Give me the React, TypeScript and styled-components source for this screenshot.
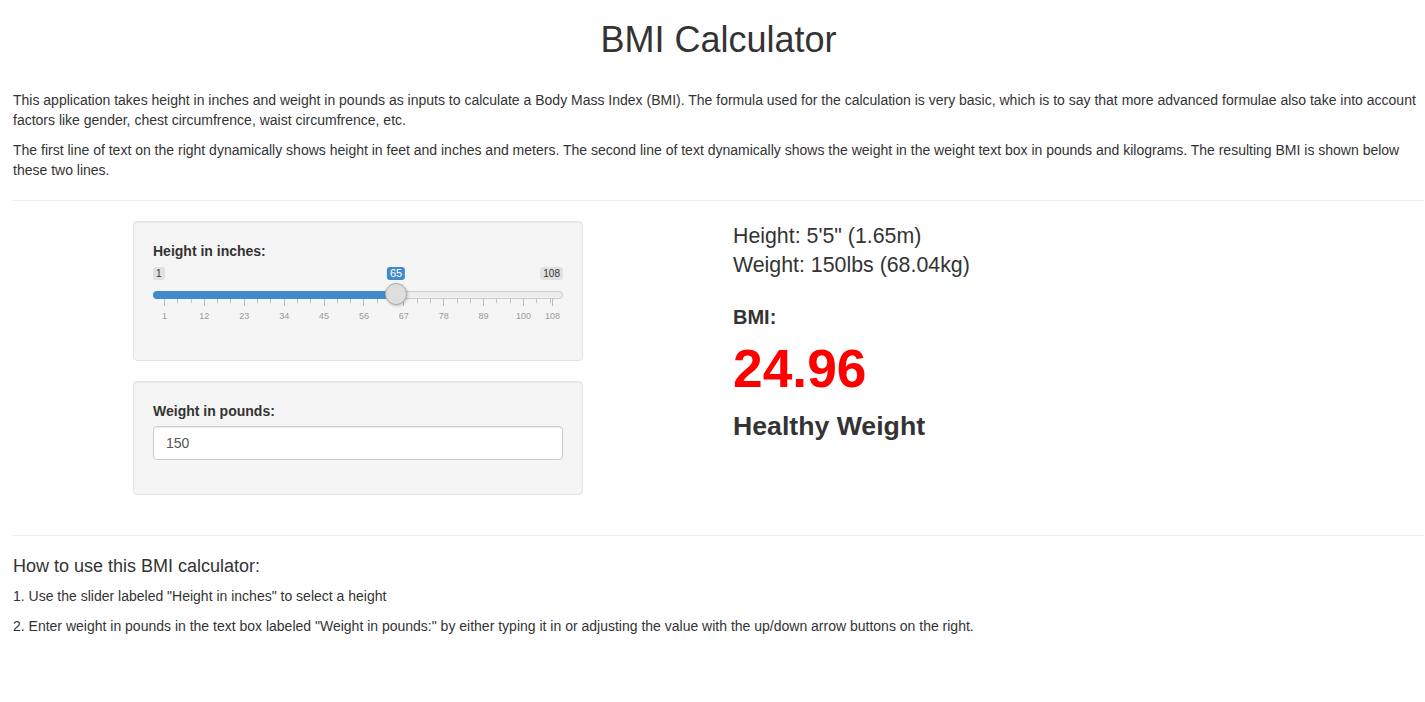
import styled, { createGlobalStyle } from "styled-components";

const GlobalStyle = createGlobalStyle`
  html, body {
    margin: 0;
    padding: 0;
    background: #fff;
    overflow-x: hidden;
  }
  body {
    font-family: "Liberation Sans", Arial, Helvetica, sans-serif;
    font-size: 14px;
    line-height: 20px;
    color: #333;
  }
  * {
    box-sizing: border-box;
  }
`;

const Page = styled.div`
  width: 1411px;
  margin-left: 13px;
`;

const Title = styled.h1`
  margin: 20px 0 30px;
  font-size: 36px;
  font-weight: 400;
  line-height: 39.6px;
  text-align: center;
`;

const Text = styled.p`
  margin: 0 0 10px;
`;

const Divider = styled.hr`
  margin: 20px 0;
  border: 0;
  border-top: 1px solid #eee;
`;

const Row = styled.div`
  display: flex;
  align-items: flex-start;
  gap: 150px;
  padding-left: 120px;
`;

const SideCol = styled.div`
  width: 450px;
  display: flex;
  flex-direction: column;
  gap: 20px;
  margin-bottom: 20px;
`;

const MainCol = styled.div`
  display: flex;
  flex-direction: column;
  padding-top: 1px;
`;

const Well = styled.div`
  padding: 19px;
  background: #f5f5f5;
  border: 1px solid #e3e3e3;
  border-radius: 4px;
  box-shadow: inset 0 1px 1px rgba(0, 0, 0, 0.05);
`;

const FormGroup = styled.div`
  display: flex;
  flex-direction: column;
  align-items: stretch;
  gap: 5px;
  margin-bottom: 15px;
`;

const Label = styled.label`
  font-weight: 700;
`;

const SliderBox = styled.div`
  position: relative;
  height: 60px;
`;

const Tag = styled.span<{ $active?: boolean }>`
  position: absolute;
  top: 1px;
  padding: 1px 3px;
  font-size: ${(p) => (p.$active ? "11px" : "10px")};
  line-height: 11px;
  border-radius: 3px;
  background: ${(p) => (p.$active ? "#428bca" : "#e1e1e1")};
  color: ${(p) => (p.$active ? "#fff" : "#333")};
  white-space: nowrap;
`;

const Line = styled.div`
  position: absolute;
  left: 0;
  right: 0;
  top: 25px;
  height: 8px;
  border: 1px solid #cccccc;
  border-radius: 8px;
  background: #eee;
`;

const Bar = styled.div`
  position: absolute;
  left: 0;
  top: 25px;
  height: 8px;
  border-radius: 8px 0 0 8px;
  background: #428bca;
`;

const Handle = styled.div`
  position: absolute;
  top: 17px;
  width: 22px;
  height: 22px;
  margin-left: -11px;
  border-radius: 50%;
  background: #dedede;
  border: 1px solid #ababab;
  box-shadow: 1px 1px 3px rgba(0, 0, 0, 0.2);
`;

const Tick = styled.span<{ $major?: boolean }>`
  position: absolute;
  top: 33px;
  width: 1px;
  height: ${(p) => (p.$major ? "7px" : "4px")};
  background: ${(p) => (p.$major ? "#9fc0df" : "#c2c2c2")};
`;

const TickLabel = styled.span`
  position: absolute;
  top: 45px;
  font-size: 9px;
  line-height: 10px;
  color: #999;
  transform: translateX(-50%);
  white-space: nowrap;
`;

const NumberInput = styled.input`
  display: block;
  width: 100%;
  height: 34px;
  padding: 6px 12px;
  font-family: inherit;
  font-size: 14px;
  line-height: 20px;
  color: #555;
  background: #fff;
  border: 1px solid #ccc;
  border-radius: 4px;
  box-shadow: inset 0 1px 1px rgba(0, 0, 0, 0.075);
  outline: none;
`;

const ResultLine = styled.div`
  font-size: 21.33px;
  line-height: 29px;
`;

const BmiLabel = styled.div`
  margin-top: 27px;
  font-size: 20px;
  line-height: 20px;
  font-weight: 700;
`;

const BmiValue = styled.div`
  margin-top: 13px;
  font-size: 53.33px;
  line-height: 58px;
  font-weight: 700;
  color: #ff0000;
`;

const Category = styled.div`
  margin-top: 14px;
  font-size: 26.67px;
  line-height: 29px;
  font-weight: 700;
`;

const SubHeading = styled.h4`
  margin: 20px 0 10px;
  font-size: 18px;
  font-weight: 400;
  line-height: 20px;
`;

const MIN = 1;
const MAX = 108;
const HEIGHT = 65;
const WEIGHT = 150;
const TRACK_W = 410;
const INSET = 11;

function posOf(v: number) {
  return INSET + ((v - MIN) / (MAX - MIN)) * (TRACK_W - INSET * 2);
}

function HeightSlider() {
  const majors = [1, 12, 23, 34, 45, 56, 67, 78, 89, 100, 108];
  const minors: number[] = [];
  for (let v = MIN; v < MAX; v += 11) {
    [v + 11 / 3, v + 22 / 3].forEach((m) => {
      if (m < MAX - 0.5) minors.push(m);
    });
  }
  const hx = posOf(HEIGHT);
  return (
    <SliderBox>
      <Tag style={{ left: 0 }}>{MIN}</Tag>
      <Tag style={{ right: 0 }}>{MAX}</Tag>
      <Line />
      <Bar style={{ width: hx }} />
      {minors.map((m) => (
        <Tick key={"m" + m} style={{ left: Math.round(posOf(m)) }} />
      ))}
      {majors.map((m) => (
        <Tick key={"M" + m} $major style={{ left: Math.round(posOf(m)) }} />
      ))}
      {majors.map((m) => (
        <TickLabel key={"l" + m} style={{ left: posOf(m) + 0.5 }}>
          {m}
        </TickLabel>
      ))}
      <Handle style={{ left: hx }} />
      <Tag $active style={{ left: hx, transform: "translateX(-50%)" }}>
        {HEIGHT}
      </Tag>
    </SliderBox>
  );
}

export default function App() {
  const feet = Math.floor(HEIGHT / 12);
  const inches = HEIGHT % 12;
  const meters = (HEIGHT * 0.0254).toFixed(2);
  const kg = (WEIGHT * 0.453592).toFixed(2);
  const bmi = ((WEIGHT / (HEIGHT * HEIGHT)) * 703).toFixed(2);

  return (
    <>
      <GlobalStyle />
      <Page>
        <Title>BMI Calculator</Title>
        <Text>
          This application takes height in inches and weight in pounds as inputs to calculate a Body Mass
          Index (BMI). The formula used for the calculation is very basic, which is to say that more advanced
          formulae also take into account factors like gender, chest circumfrence, waist circumfrence, etc.
        </Text>
        <Text>
          The first line of text on the right dynamically shows height in feet and inches and meters. The
          second line of text dynamically shows the weight in the weight text box in pounds and kilograms. The
          resulting BMI is shown below these two lines.
        </Text>
        <Divider />
        <Row>
          <SideCol>
            <Well>
              <FormGroup>
                <Label>Height in inches:</Label>
                <HeightSlider />
              </FormGroup>
            </Well>
            <Well>
              <FormGroup>
                <Label>Weight in pounds:</Label>
                <NumberInput type="text" defaultValue={WEIGHT} />
              </FormGroup>
            </Well>
          </SideCol>
          <MainCol>
            <ResultLine>
              Height: {feet}'{inches}" ({meters}m)
            </ResultLine>
            <ResultLine>
              Weight: {WEIGHT}lbs ({kg}kg)
            </ResultLine>
            <BmiLabel>BMI:</BmiLabel>
            <BmiValue>{bmi}</BmiValue>
            <Category>Healthy Weight</Category>
          </MainCol>
        </Row>
        <Divider />
        <SubHeading>How to use this BMI calculator:</SubHeading>
        <Text>1. Use the slider labeled "Height in inches" to select a height</Text>
        <Text>
          2. Enter weight in pounds in the text box labeled "Weight in pounds:" by either typing it in or
          adjusting the value with the up/down arrow buttons on the right.
        </Text>
      </Page>
    </>
  );
}
